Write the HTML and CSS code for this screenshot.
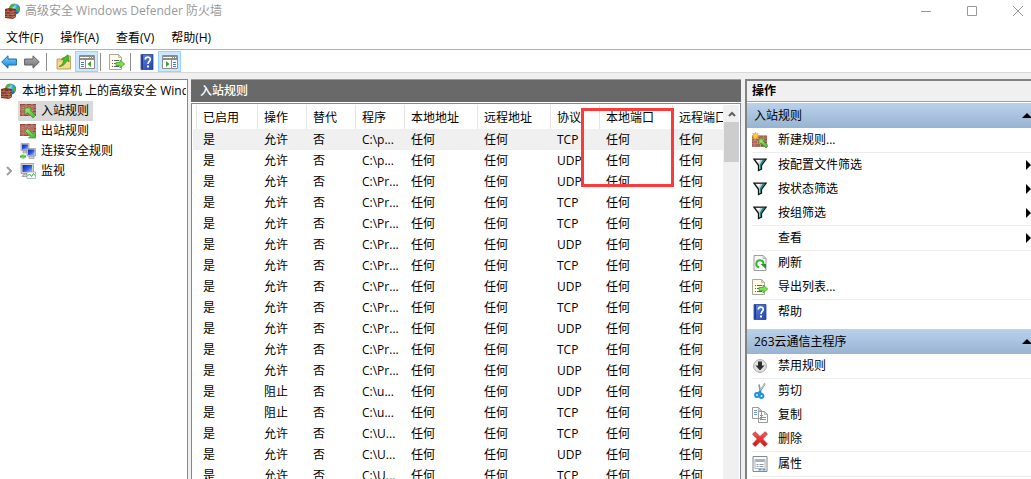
FILE: index.html
```html
<!DOCTYPE html>
<html lang="zh-CN">
<head>
<meta charset="utf-8">
<meta name="viewport" content="width=device-width, initial-scale=1">
<title>高级安全 Windows Defender 防火墙</title>
<link rel="stylesheet" href="styles.css">
</head>
<body>
<svg class="defs" aria-hidden="true">
  <defs>
    <linearGradient id="g-blue" x1="0" y1="0" x2="0" y2="1"><stop offset="0" stop-color="#7fd4ff"/><stop offset="1" stop-color="#0e84d8"/></linearGradient>
    <linearGradient id="g-grey" x1="0" y1="0" x2="0" y2="1"><stop offset="0" stop-color="#b5b5b5"/><stop offset="1" stop-color="#6f6f6f"/></linearGradient>
    <linearGradient id="g-green" x1="0" y1="0" x2="1" y2="1"><stop offset="0" stop-color="#a6ee7a"/><stop offset="1" stop-color="#3fb52a"/></linearGradient>
    <linearGradient id="g-help" x1="0" y1="0" x2="1" y2="1"><stop offset="0" stop-color="#5f86dc"/><stop offset="1" stop-color="#2242ac"/></linearGradient>
    <linearGradient id="g-screen" x1="0" y1="0" x2="1" y2="1"><stop offset="0" stop-color="#0a1fa8"/><stop offset=".5" stop-color="#2b55e0"/><stop offset="1" stop-color="#9dc0ff"/></linearGradient>
    <linearGradient id="g-red" x1="0" y1="0" x2="0" y2="1"><stop offset="0" stop-color="#f4605a"/><stop offset="1" stop-color="#d01212"/></linearGradient>
    <radialGradient id="g-globe" cx=".4" cy=".3" r=".8"><stop offset="0" stop-color="#b9ecff"/><stop offset=".5" stop-color="#2f94e0"/><stop offset="1" stop-color="#0a3f9c"/></radialGradient>
  </defs>
  <symbol id="i-bricks" viewBox="0 0 16 14">
    <path fill="#9a4636" d="M0 1h16v12H0z"/>
    <path fill="#bd6c57" d="M1 2h4v1H1zM7 2h4v1H7zM13 2h3v1h-3zM0 5h2v1H0zM4 5h4v1H4zM10 5h4v1h-4zM1 8h4v1H1zM7 8h4v1H7zM0 11h2v1H0zM4 11h4v1H4z"/>
    <path stroke="#cfb0a4" stroke-width=".8" fill="none" d="M0 4h16M0 7h16M0 10h16M6 1v3M12 1v3M3 4v3M9 4v3M6 7v3M12 7v3M3 10v3M9 10v3"/>
  </symbol>
  <symbol id="i-firewall" viewBox="0 0 16 16">
    <circle cx="9.5" cy="6" r="5.6" fill="url(#g-globe)"/>
    <path fill="#48b544" d="M6 1.500c2-1.200 3-.8 4 0l-1 2-2 1-1 2-2-1zM11 4l2-1 2 3-1 3-2-1z"/>
    <path fill="#83321f" d="M0 6l4-1 7 1v8l-3 2-8-1z"/>
    <path stroke="#c98a72" stroke-width=".7" fill="none" d="M0 8.500l8 .5 3-1M0 11l8 .5 3-1M0 13.500l8 .5 3-1M3 6v3M6 9v2.500M3 11v2.500M8 7v9"/>
  </symbol>
  <symbol id="i-inbound" viewBox="0 0 16 16">
    <use href="#i-bricks" width="16" height="14"/>
    <path d="M5 5h7l-2 2 5.500 5.500-2.500 2.500L7.500 9.500 5 12z" fill="url(#g-green)" stroke="#3f9a30" stroke-width=".8"/>
  </symbol>
  <symbol id="i-outbound" viewBox="0 0 16 16">
    <use href="#i-bricks" width="16" height="14"/>
    <path d="M15.500 15h-7l2-2L5 8l2.500-2.500L13 11l2.500-2.500z" fill="url(#g-green)" stroke="#3f9a30" stroke-width=".8"/>
  </symbol>
  <symbol id="i-newrule" viewBox="0 0 16 16">
    <svg y="2" width="15" height="14" viewBox="0 0 16 14"><use href="#i-bricks" width="16" height="14"/></svg>
    <path d="M7 7h6l-2 2 5 4.500-2 2.500-5-5-2 2z" fill="url(#g-green)" stroke="#3f9a30" stroke-width=".8"/>
    <path fill="#ffc93c" stroke="#e8981c" stroke-width=".5" d="M3.500 0l.8 2 2-.8-.8 2 2 .8-2 .8.8 2-2-.8-.8 2-.8-2-2 .8.8-2-2-.8 2-.8-.8-2 2 .8z"/>
  </symbol>
  <symbol id="i-connection" viewBox="0 0 16 16">
    <path fill="#d4d4cc" stroke="#8b8b88" stroke-width=".6" d="M1 .5h8v7H1zM3 8h4v2H3z"/><path fill="url(#g-screen)" d="M2 1.500h6v5H2z"/>
    <path fill="#d4d4cc" stroke="#8b8b88" stroke-width=".6" d="M7 5.500h8.500v7.500H7zM9 13h5v2.500H9z"/><path fill="url(#g-screen)" d="M8 6.500h6.500v5.500H8z"/>
    <path stroke="#44a33b" stroke-width="2" d="M0 13.500h6"/><path fill="#62cf4b" d="M1.500 11.500h3v4h-3z"/>
  </symbol>
  <symbol id="i-monitor" viewBox="0 0 16 16">
    <path fill="#d4d4cc" stroke="#8b8b88" stroke-width=".7" d="M1 .5h12.500v10H1zM4 11h6l2 2.500H2z"/><path fill="url(#g-screen)" d="M2.500 2H12v7H2.500z"/>
    <path fill="#f8fff8" stroke="#8aa4a8" stroke-width=".7" d="M7 9h8.500v6.500H7z"/><path fill="none" stroke="#3daa35" d="M7.500 13l2-2 2 2.500 2-3 1.500 2"/>
  </symbol>
  <symbol id="i-back" viewBox="0 0 16 14"><path d="M.7 7L7 .8V4h8.400v6H7v3.200z" fill="url(#g-blue)" stroke="#176da8"/></symbol>
  <symbol id="i-forward" viewBox="0 0 16 14"><path d="M15.300 7L9 .8V4H.6v6H9v3.200z" fill="url(#g-grey)" stroke="#606060"/></symbol>
  <symbol id="i-folder" viewBox="0 0 16 16">
    <path fill="#efce7d" stroke="#b9964a" stroke-width=".8" d="M1 5h5l1-1.500h3V2h4.500v13H1z"/><path fill="#f6dc96" d="M2 8h12v6H2z"/>
    <path d="M3 12.500c3-1 4.500-4 5-6.500L5.500 5.500 12 .8l1 7-2.200-1.500C10 9.500 7 12.500 3 12.500z" fill="#46c12e" stroke="#278b1c" stroke-width=".7"/>
  </symbol>
  <symbol id="i-panel-left" viewBox="0 0 16 14">
    <path fill="#fff" stroke="#8d8d8d" d="M.5.500h15v13H.5z"/><path fill="#8d8d8d" d="M1 1h14v3H1z"/><path fill="#fff" d="M11 2h1v1h-1zM13 2h1v1h-1zM1 2h9v1H1z"/>
    <path stroke="#8d8d8d" d="M6.500 4v9.500M1 4.500h14"/><path stroke="#4878bd" d="M2 7.500h3M2 9.500h3M2 11.500h3"/><path fill="#38a629" d="M12 6v6L8.500 9z"/>
  </symbol>
  <symbol id="i-panel-right" viewBox="0 0 16 14">
    <path fill="#fff" stroke="#8d8d8d" d="M.5.500h15v13H.5z"/><path fill="#8d8d8d" d="M1 1h14v3H1z"/><path fill="#fff" d="M11 2h1v1h-1zM13 2h1v1h-1zM1 2h9v1H1z"/>
    <path stroke="#8d8d8d" d="M9.500 4v9.500M1 4.500h14"/><path stroke="#4878bd" d="M11 7.500h3M11 9.500h3M11 11.500h3"/><path fill="#38a629" d="M4 6v6l3.500-3z"/>
  </symbol>
  <symbol id="i-export" viewBox="0 0 16 16">
    <path fill="#fffbe6" stroke="#a39e8e" stroke-width=".9" d="M.5.500h9l3 3v12H.5z"/><path fill="#e4dfcc" stroke="#a39e8e" stroke-width=".6" d="M9.500.500v3h3z"/>
    <path stroke="#5a5f78" stroke-dasharray="1 1 5 9" d="M3 6.500h7M3 9.500h7M3 12.500h7"/>
    <path d="M7 8.500h4V6l4.700 4-4.700 4v-2.500H7z" fill="#7be04c" stroke="#3ca32b" stroke-width=".8"/>
  </symbol>
  <symbol id="i-help" viewBox="0 0 13 16">
    <path fill="url(#g-help)" stroke="#2343a0" stroke-width=".8" d="M.5.500h12v15H.5z"/><path fill="#1d378e" d="M1 1h1.500v14H1z"/>
    <path fill="none" stroke="#fff" stroke-width="1.700" d="M4.800 5.500c0-3 5-3 5-.3 0 2-2.300 2.300-2.300 4.800"/><path fill="#fff" d="M6.500 11.500h2v2h-2z"/>
  </symbol>
  <symbol id="i-filter" viewBox="0 0 14 13">
    <path fill="#c9d0d0" stroke="#111" stroke-width="1.300" d="M.9.700h12.200L8.500 6.800v3.700L5.500 12V6.800z"/><path fill="#fff" d="M3 1.500h4l-1 3z"/><path fill="#16898b" d="M9.500 1.500h2.300L8 6.500V10l-1 .8V6z"/>
  </symbol>
  <symbol id="i-refresh" viewBox="0 0 13 16">
    <path fill="#f8f8f8" stroke="#9d9d9d" d="M.5.500h9l3 3v12H.5z"/><path fill="#ddd" stroke="#9d9d9d" stroke-width=".6" d="M9.500.500v3h3z"/>
    <path fill="none" stroke="#35b52c" stroke-width="2" d="M5.500 12.300A3.600 3.600 0 1 1 10 9"/><path fill="#25981d" d="M7 9h5.500v5z"/>
  </symbol>
  <symbol id="i-disable" viewBox="0 0 14 14"><circle cx="7" cy="7" r="6.400" fill="#e2e2e2" stroke="#a9a9a9"/><path fill="#2e2e2e" d="M5 2.500h4v4h2.500L7 11.500 2.500 6.500H5z"/></symbol>
  <symbol id="i-cut" viewBox="0 0 12 16">
    <path stroke="#8b9aa6" stroke-width="1.700" d="M5 1.500l1.500 8M11 .5L5 10"/><path stroke="#dfe6eb" stroke-width=".6" d="M10.500 1L5 9"/>
    <circle cx="3" cy="12" r="1.900" fill="none" stroke="#1b92df" stroke-width="2"/><circle cx="7.500" cy="13" r="1.900" fill="none" stroke="#1b92df" stroke-width="2"/><path fill="none" stroke="#1b92df" stroke-width="2" d="M4 10.500l2-2 1.500 3"/>
  </symbol>
  <symbol id="i-copy" viewBox="0 0 16 16">
    <path fill="#fff" stroke="#8f8f8f" stroke-width=".9" d="M.5.500h6l3 3v8h-9zM6.500 4.500h6l3 3v8h-9z"/><path fill="#ddd" stroke="#8f8f8f" stroke-width=".6" d="M6.500.500v3h3zM12.500 4.500v3h3z"/>
    <path stroke="#6d94c4" d="M2 3.500h3M2 5.500h3M2 7.500h3M8 8.500h3M8 10.500h6M8 12.500h6"/>
  </symbol>
  <symbol id="i-delete" viewBox="0 0 16 16"><path d="M3 .7L8 5.500 13.200.7l2.200 2.400L10.700 8l4.700 5-2.700 2.400L8 10.700l-4.800 4.700L.6 13l4.700-5L.6 3.200z" fill="url(#g-red)" stroke="#c22020" stroke-width=".7"/></symbol>
  <symbol id="i-properties" viewBox="0 0 15 16">
    <path fill="#f7f9fb" stroke="#808890" d="M.5.500h14v15H.5z"/><path fill="#fff" stroke="#9aa4ae" stroke-width=".8" d="M2.500 3.500h10v9h-10z"/><path fill="#a4b0bd" d="M3 4h9v2H3z"/>
    <path stroke="#8b97a5" d="M4 8.500h2M7 8.500h4M4 10.500h2M7 10.500h4"/><path fill="#32a8d8" d="M6 13h3v1.500H6zM10 13h3v1.500h-3z"/>
  </symbol>
</svg>

<div class="window">
  <header class="titlebar">
    <svg class="icon"><use href="#i-firewall"/></svg>
    <h1 class="title">高级安全 Windows Defender 防火墙</h1>
    <div class="window-buttons">
      <button class="window-button" aria-label="最小化"><svg viewBox="0 0 10 10"><path d="M0 5.500h10"/></svg></button>
      <button class="window-button" aria-label="最大化"><svg viewBox="0 0 10 10"><path d="M.5.500h9v9h-9z"/></svg></button>
      <button class="window-button" aria-label="关闭"><svg viewBox="0 0 10 10"><path d="M0 0l10 10M10 0L0 10"/></svg></button>
    </div>
  </header>

  <nav class="menubar" aria-label="菜单">
    <button class="menu">文件(F)</button><button class="menu">操作(A)</button><button class="menu">查看(V)</button><button class="menu">帮助(H)</button>
  </nav>

  <div class="toolbar" role="toolbar" aria-label="工具栏">
    <button class="tool tool-back" aria-label="后退"><svg class="icon"><use href="#i-back"/></svg></button>
    <button class="tool tool-forward" aria-label="前进"><svg class="icon"><use href="#i-forward"/></svg></button>
    <span class="divider"></span>
    <button class="tool" aria-label="向上"><svg class="icon"><use href="#i-folder"/></svg></button>
    <button class="tool tool-on" aria-label="显示/隐藏控制台树" aria-pressed="true"><svg class="icon"><use href="#i-panel-left"/></svg></button>
    <span class="divider"></span>
    <button class="tool" aria-label="导出列表"><svg class="icon"><use href="#i-export"/></svg></button>
    <span class="divider"></span>
    <button class="tool" aria-label="帮助"><svg class="icon"><use href="#i-help"/></svg></button>
    <button class="tool tool-on" aria-label="显示/隐藏操作窗格" aria-pressed="true"><svg class="icon"><use href="#i-panel-right"/></svg></button>
  </div>

  <main class="workspace">
    <nav class="tree" aria-label="控制台树">
      <button class="node root"><svg class="icon"><use href="#i-firewall"/></svg><span class="label">本地计算机 上的高级安全 Windows Defender 防火墙</span></button>
      <ul class="branch">
        <li class="leaf"><button class="node selected"><svg class="icon"><use href="#i-inbound"/></svg><span class="label">入站规则</span></button></li>
        <li class="leaf"><button class="node"><svg class="icon"><use href="#i-outbound"/></svg><span class="label">出站规则</span></button></li>
        <li class="leaf"><button class="node"><svg class="icon"><use href="#i-connection"/></svg><span class="label">连接安全规则</span></button></li>
        <li class="leaf"><svg class="chevron" viewBox="0 0 6 10"><path d="M1 1l4 4-4 4"/></svg><button class="node"><svg class="icon"><use href="#i-monitor"/></svg><span class="label">监视</span></button></li>
      </ul>
    </nav>

    <section class="rules">
      <h2 class="rules-title">入站规则</h2>
      <div class="list">
        <div class="list-view">
          <table class="grid">
            <colgroup><col class="c-edge"><col class="c-enabled"><col class="c-short"><col class="c-short"><col class="c-short"><col class="c-long"><col class="c-long"><col class="c-short"><col class="c-long"><col class="c-long"></colgroup>
            <thead><tr><td></td><th>已启用</th><th>操作</th><th>替代</th><th>程序</th><th>本地地址</th><th>远程地址</th><th>协议</th><th>本地端口</th><th>远程端口</th></tr></thead>
            <tbody>
              <tr class="current"><td></td><td>是</td><td>允许</td><td>否</td><td>C:\p...</td><td>任何</td><td>任何</td><td>TCP</td><td>任何</td><td>任何</td></tr>
              <tr><td></td><td>是</td><td>允许</td><td>否</td><td>C:\p...</td><td>任何</td><td>任何</td><td>UDP</td><td>任何</td><td>任何</td></tr>
              <tr><td></td><td>是</td><td>允许</td><td>否</td><td>C:\Pr...</td><td>任何</td><td>任何</td><td>UDP</td><td>任何</td><td>任何</td></tr>
              <tr><td></td><td>是</td><td>允许</td><td>否</td><td>C:\Pr...</td><td>任何</td><td>任何</td><td>TCP</td><td>任何</td><td>任何</td></tr>
              <tr><td></td><td>是</td><td>允许</td><td>否</td><td>C:\Pr...</td><td>任何</td><td>任何</td><td>TCP</td><td>任何</td><td>任何</td></tr>
              <tr><td></td><td>是</td><td>允许</td><td>否</td><td>C:\Pr...</td><td>任何</td><td>任何</td><td>UDP</td><td>任何</td><td>任何</td></tr>
              <tr><td></td><td>是</td><td>允许</td><td>否</td><td>C:\Pr...</td><td>任何</td><td>任何</td><td>TCP</td><td>任何</td><td>任何</td></tr>
              <tr><td></td><td>是</td><td>允许</td><td>否</td><td>C:\Pr...</td><td>任何</td><td>任何</td><td>UDP</td><td>任何</td><td>任何</td></tr>
              <tr><td></td><td>是</td><td>允许</td><td>否</td><td>C:\Pr...</td><td>任何</td><td>任何</td><td>TCP</td><td>任何</td><td>任何</td></tr>
              <tr><td></td><td>是</td><td>允许</td><td>否</td><td>C:\Pr...</td><td>任何</td><td>任何</td><td>UDP</td><td>任何</td><td>任何</td></tr>
              <tr><td></td><td>是</td><td>允许</td><td>否</td><td>C:\Pr...</td><td>任何</td><td>任何</td><td>TCP</td><td>任何</td><td>任何</td></tr>
              <tr><td></td><td>是</td><td>允许</td><td>否</td><td>C:\Pr...</td><td>任何</td><td>任何</td><td>UDP</td><td>任何</td><td>任何</td></tr>
              <tr><td></td><td>是</td><td>阻止</td><td>否</td><td>C:\u...</td><td>任何</td><td>任何</td><td>UDP</td><td>任何</td><td>任何</td></tr>
              <tr><td></td><td>是</td><td>阻止</td><td>否</td><td>C:\u...</td><td>任何</td><td>任何</td><td>TCP</td><td>任何</td><td>任何</td></tr>
              <tr><td></td><td>是</td><td>允许</td><td>否</td><td>C:\U...</td><td>任何</td><td>任何</td><td>TCP</td><td>任何</td><td>任何</td></tr>
              <tr><td></td><td>是</td><td>允许</td><td>否</td><td>C:\U...</td><td>任何</td><td>任何</td><td>UDP</td><td>任何</td><td>任何</td></tr>
              <tr><td></td><td>是</td><td>允许</td><td>否</td><td>C:\U...</td><td>任何</td><td>任何</td><td>TCP</td><td>任何</td><td>任何</td></tr>
            </tbody>
          </table>
          <div class="marker"></div>
        </div>
        <div class="scrollbar"><button class="scroll-up" aria-label="向上滚动"><svg viewBox="0 0 8 6"><path d="M1 5l3-3 3 3"/></svg></button><div class="thumb"></div></div>
      </div>
    </section>

    <aside class="actions">
      <h2 class="actions-title">操作</h2>
      <button class="section">入站规则<span class="collapse"></span></button>
      <ul class="action-list">
        <li><button class="action"><svg class="icon"><use href="#i-newrule"/></svg>新建规则...</button></li>
        <li class="group"><button class="action"><svg class="icon icon-small"><use href="#i-filter"/></svg>按配置文件筛选<span class="more"></span></button></li>
        <li><button class="action"><svg class="icon icon-small"><use href="#i-filter"/></svg>按状态筛选<span class="more"></span></button></li>
        <li><button class="action"><svg class="icon icon-small"><use href="#i-filter"/></svg>按组筛选<span class="more"></span></button></li>
        <li class="group"><button class="action"><span class="icon"></span>查看<span class="more"></span></button></li>
        <li class="group"><button class="action"><svg class="icon"><use href="#i-refresh"/></svg>刷新</button></li>
        <li><button class="action"><svg class="icon"><use href="#i-export"/></svg>导出列表...</button></li>
        <li class="group"><button class="action"><svg class="icon"><use href="#i-help"/></svg>帮助</button></li>
      </ul>
      <button class="section section-next">263云通信主程序<span class="collapse"></span></button>
      <ul class="action-list">
        <li><button class="action"><svg class="icon icon-small"><use href="#i-disable"/></svg>禁用规则</button></li>
        <li class="group"><button class="action"><svg class="icon"><use href="#i-cut"/></svg>剪切</button></li>
        <li><button class="action"><svg class="icon"><use href="#i-copy"/></svg>复制</button></li>
        <li><button class="action"><svg class="icon"><use href="#i-delete"/></svg>删除</button></li>
        <li class="group group-last"><button class="action"><svg class="icon"><use href="#i-properties"/></svg>属性</button></li>
      </ul>
    </aside>
  </main>
</div>
</body>
</html>
```
FILE: styles.css
```css
* { box-sizing: border-box; }

body {
  margin: 0;
  color: #000;
  background: #fff;
  font: 12px/20px "Open Sans", "Noto Sans CJK SC", sans-serif;
}

button {
  margin: 0;
  padding: 0;
  border: 0;
  background: none;
  color: inherit;
  font: inherit;
  text-align: left;
  white-space: nowrap;
}

h1, h2 { margin: 0; font-size: 12px; font-weight: 400; }
ul { margin: 0; padding: 0; list-style: none; }

.defs { position: absolute; width: 0; height: 0; }
.icon { flex: none; width: 16px; height: 16px; }
.icon-small { padding: 1px; }

.window {
  display: flex;
  flex-direction: column;
  height: 100vh;
  overflow: hidden;
}

/* Title bar and menus */
.titlebar {
  display: flex;
  align-items: center;
  height: 25px;
  padding: 0 8px 4px 5px;
  color: #999;
}
.title { flex: 1; padding-left: 4px; }
.window-buttons { display: flex; gap: 36px; }
.window-button { display: flex; width: 10px; height: 10px; }
.window-button svg { width: 10px; height: 10px; overflow: visible; fill: none; stroke: #999; }

.menubar {
  display: flex;
  align-items: center;
  gap: 17px;
  height: 24px;
  padding: 1px 0 0 6px;
}

.toolbar {
  display: flex;
  align-items: center;
  height: 24px;
  padding-top: 1px;
  border-top: 1px solid #b0b0b8;
  border-bottom: 1px solid #d8d8d8;
}
.tool { display: flex; align-items: center; justify-content: center; width: 23px; height: 21px; border: 1px solid transparent; }
.tool-back { width: 18px; }
.tool-forward { width: 27px; }
.tool-on { background: #cce8ff; border-color: #99d1ff; }
.divider { width: 1px; height: 18px; margin: 0 5px 0 1px; background: #8d8d8d; }
.tool + .divider ~ .tool + .divider { margin: 0 4px 0 2px; }

/* Panes */
.workspace {
  flex: 1;
  display: grid;
  grid-template-columns: 188px minmax(0, 1fr) 286px;
  min-height: 0;
  padding-top: 6px;
  background: #f0f0f0;
}

.tree {
  overflow: hidden;
  padding-top: 1px;
  border: solid #828790;
  border-width: 1px 1px 0 0;
  background: #fff;
}
.node { display: flex; align-items: center; gap: 5px; height: 20px; padding: 0 4px 0 2px; }
.root { width: 100%; padding: 0 1px; }
.root .label { overflow: hidden; }
.branch { padding-left: 2px; }
.leaf { display: flex; align-items: center; padding-left: 16px; }
.chevron { width: 6px; height: 10px; margin: 0 6px 0 -12px; fill: none; stroke: #a0a0a0; stroke-width: 2; }
.selected { background: #d9d9d9; }

.rules {
  display: flex;
  flex-direction: column;
  min-height: 0;
  margin: 0 4px 0 3px;
}
.rules-title {
  height: 24px;
  padding-left: 9px;
  border-top: 1px solid #a0a0a0;
  border-bottom: 1px solid #fff;
  background: #696969;
  color: #fff;
  font-weight: 500;
  line-height: 22px;
}
.list {
  flex: 1;
  display: flex;
  min-height: 0;
  padding: 1px 1px 0;
  border: solid #828790;
  border-width: 1px 1px 0;
  background: #fff;
}
.list-view { position: relative; flex: 1; min-width: 0; overflow: hidden; }

.grid { width: 553px; min-width: 100%; border-collapse: separate; border-spacing: 0; table-layout: fixed; }
.c-edge { width: 4px; }
.c-enabled { width: 61px; }
.c-short { width: 49px; }
.c-long { width: 73px; }
.grid th, .grid td { height: 21px; padding: 0 0 0 6px; line-height: 21px; font-weight: 400; text-align: left; white-space: nowrap; }
.grid td:first-child { padding: 0; }
.grid thead th, .grid thead td { height: 24px; border-right: 1px solid #e5e5e5; }
.current { background: #f0f0f0; }

.marker {
  position: absolute;
  top: 3px;
  left: 388px;
  width: 93px;
  height: 79px;
  border: 3px solid #fb3a3a;
}

.scrollbar { width: 16px; padding-left: 1px; background: #f0f0f0; }
.scroll-up { display: flex; align-items: center; justify-content: center; width: 100%; height: 17px; }
.scroll-up svg { width: 8px; height: 6px; fill: none; stroke: #606060; stroke-width: 2; }
.thumb { height: 40px; background: #cdcdcd; }

/* Actions */
.actions {
  overflow: hidden;
  border: solid #828282;
  border-width: 2px 0 0 2px;
  background: #fff;
}
.actions-title { height: 21px; padding-left: 5px; border-bottom: 1px solid #a0a0a0; background: #f0f0f0; font-weight: 700; }
.section {
  display: flex;
  align-items: center;
  justify-content: space-between;
  width: 100%;
  height: 25px;
  margin-top: 1px;
  padding-left: 7px;
  background: linear-gradient(#bad1eb, #98b4d2);
}
.section-next { margin-top: 5px; }
.collapse { border: solid transparent; border-width: 0 5px 5px; border-bottom-color: #000; margin-right: -1px; }
.action-list { padding-left: 5px; }
.group { border-top: 1px solid #ededed; }
.group-last { border-bottom: 1px solid #ededed; }
.action { display: flex; align-items: center; gap: 10px; width: 100%; height: 24px; }
.more { margin-left: auto; border: solid transparent; border-width: 5px 0 5px 5px; border-left-color: #000; }
```
